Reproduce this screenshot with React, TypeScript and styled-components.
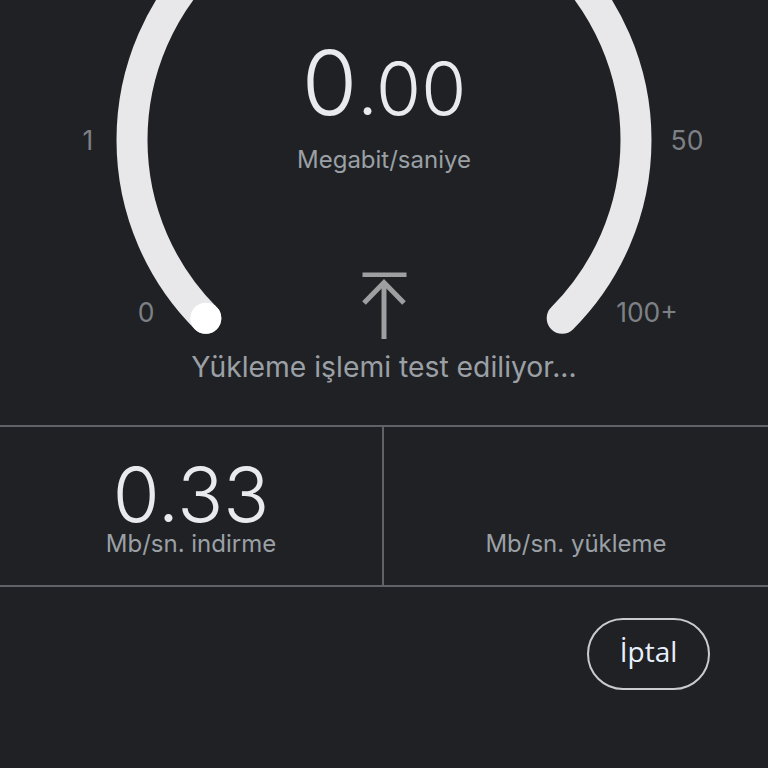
import React from "react";
import styled, { createGlobalStyle } from "styled-components";

const GlobalStyle = createGlobalStyle`
  html, body {
    margin: 0;
    padding: 0;
    background: #202124;
  }
  body {
    font-family: Inter, "Liberation Sans", Arial, sans-serif;
    -webkit-font-smoothing: antialiased;
  }
`;

const Page = styled.div`
  width: 768px;
  height: 768px;
  overflow: hidden;
  background: #202124;
  display: flex;
  flex-direction: column;
`;

const GaugeSection = styled.section`
  position: relative;
  height: 425px;
  flex: none;
  display: flex;
  flex-direction: column;
  align-items: center;
  border-bottom: 2px solid #5f6368;
`;

const GaugeArt = styled.svg`
  position: absolute;
  left: 0;
  top: 0;
  width: 768px;
  height: 425px;
  pointer-events: none;
`;

const Tick = styled.span<{ $x: number; $y: number }>`
  position: absolute;
  left: ${(p) => p.$x}px;
  top: ${(p) => p.$y}px;
  transform: translate(-50%, -50%);
  font-size: 26.5px;
  line-height: 1;
  color: #7d8084;
  white-space: nowrap;
`;

const Reading = styled.div`
  position: relative;
  margin-top: 38px;
  height: 90px;
  font-size: 90px;
  line-height: 90px;
  color: #e8eaed;
  font-weight: 300;
  white-space: nowrap;
`;

const Decimals = styled.span`
  font-size: 73px;
  line-height: 0;
`;

const Unit = styled.div`
  position: relative;
  margin-top: 20px;
  font-size: 24px;
  line-height: 24px;
  color: #9aa0a6;
`;

const UploadIcon = styled.svg`
  position: relative;
  margin-top: 100px;
  width: 48px;
  height: 68px;
  flex: none;
`;

const Status = styled.div`
  position: relative;
  margin-top: 13px;
  font-size: 28.3px;
  line-height: 28px;
  color: #9aa0a6;
  white-space: nowrap;
`;

const StatsRow = styled.section`
  display: grid;
  grid-template-columns: 1fr 1fr;
  height: 158px;
  flex: none;
  border-bottom: 2px solid #5f6368;
`;

const StatCell = styled.div<{ $divider?: boolean }>`
  display: flex;
  flex-direction: column;
  align-items: center;
  padding-top: 35px;
  border-right: ${(p) => (p.$divider ? "2px solid #5f6368" : "none")};
`;

const StatValue = styled.div`
  height: 64px;
  font-size: 76px;
  line-height: 64px;
  font-weight: 300;
  color: #e8eaed;
`;

const StatLabel = styled.div`
  margin-top: 6px;
  font-size: 24px;
  line-height: 24px;
  color: #9aa0a6;
  white-space: nowrap;
`;

const Footer = styled.footer`
  display: flex;
  justify-content: flex-end;
  padding: 31px 58px 0 0;
`;

const CancelButton = styled.button`
  box-sizing: border-box;
  width: 123px;
  height: 72px;
  border-radius: 36px;
  border: 2px solid #c9cbce;
  background: transparent;
  color: #e8f0fe;
  font-family: "Open Sans", Inter, sans-serif;
  font-size: 28px;
  line-height: 1;
  padding: 0 0 6px 0;
  cursor: pointer;
`;

const cx = 384;
const cy = 140;
const R = 252;
const a = (R * Math.SQRT2) / 2;
const sx = cx - a;
const ex = cx + a;
const ey = cy + a;

export default function App() {
  return (
    <>
      <GlobalStyle />
      <Page>
        <GaugeSection>
          <GaugeArt viewBox="0 0 768 425">
            <path
              d={`M ${sx} ${ey} A ${R} ${R} 0 1 1 ${ex} ${ey}`}
              fill="none"
              stroke="#e8e8ea"
              strokeWidth={31}
              strokeLinecap="round"
            />
            <circle cx={sx} cy={ey} r={15.5} fill="#ffffff" />
          </GaugeArt>
          <Tick $x={88} $y={140}>1</Tick>
          <Tick $x={687} $y={140}>50</Tick>
          <Tick $x={146} $y={312}>0</Tick>
          <Tick $x={647} $y={312}>100+</Tick>
          <Reading>
            0<Decimals>.00</Decimals>
          </Reading>
          <Unit>Megabit/saniye</Unit>
          <UploadIcon viewBox="0 0 48 68">
            <rect x={2.5} y={0.5} width={44} height={4.5} fill="#9e9fa1" />
            <path
              d="M4 31 L24 10.5 L44 31"
              fill="none"
              stroke="#9e9fa1"
              strokeWidth={5}
              strokeLinejoin="miter"
            />
            <path d="M24 12 V67" stroke="#9e9fa1" strokeWidth={5} />
          </UploadIcon>
          <Status>Yükleme işlemi test ediliyor...</Status>
        </GaugeSection>
        <StatsRow>
          <StatCell $divider>
            <StatValue>0.33</StatValue>
            <StatLabel>Mb/sn. indirme</StatLabel>
          </StatCell>
          <StatCell>
            <StatValue />
            <StatLabel>Mb/sn. yükleme</StatLabel>
          </StatCell>
        </StatsRow>
        <Footer>
          <CancelButton>İptal</CancelButton>
        </Footer>
      </Page>
    </>
  );
}
